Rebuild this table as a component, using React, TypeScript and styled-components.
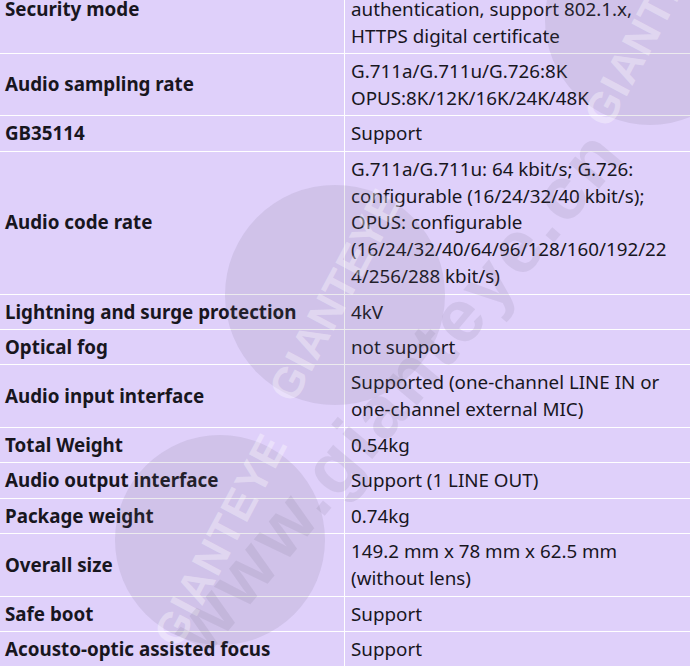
import React from 'react';
import styled, { createGlobalStyle } from 'styled-components';

const GlobalStyle = createGlobalStyle`
  html, body {
    margin: 0;
    padding: 0;
    background: #dfd0fa;
  }
  body {
    font-family: 'Noto Sans', 'Open Sans', sans-serif;
    color: #18161e;
  }
`;

const Viewport = styled.div`
  position: relative;
  width: 690px;
  height: 667px;
  overflow: hidden;
  background: #dfd0fa;
`;

const SpecTable = styled.table`
  width: 690px;
  margin-top: -35px;
  border-collapse: collapse;
  table-layout: fixed;
  font-size: 18.8px;
  line-height: 26.8px;
`;

const Row = styled.tr`
  border-bottom: 1px solid #ffffff;
`;

const LabelCell = styled.td`
  width: 334px;
  padding: 4px 5px 3.7px;
  font-weight: 700;
  vertical-align: middle;
  border-right: 1px solid #ffffff;
`;

const ValueCell = styled.td`
  padding: 4px 5px 3.7px 6px;
  vertical-align: middle;
  word-break: break-all;
`;

const Watermark = styled.div`
  position: absolute;
  inset: 0;
  pointer-events: none;
`;

const Blob = styled.div<{ $x: number; $y: number; $r: number }>`
  position: absolute;
  left: ${({ $x, $r }) => $x - $r}px;
  top: ${({ $y, $r }) => $y - $r}px;
  width: ${({ $r }) => $r * 2}px;
  height: ${({ $r }) => $r * 2}px;
  border-radius: 50%;
  background: rgba(110, 100, 120, 0.13);
  display: flex;
  align-items: center;
  justify-content: center;
`;

const BlobText = styled.span`
  transform: rotate(-62deg);
  font-family: 'Liberation Sans', sans-serif;
  font-weight: 700;
  font-size: 44px;
  letter-spacing: 1px;
  color: rgba(255, 255, 255, 0.35);
  white-space: nowrap;
`;

const Url = styled.div`
  position: absolute;
  left: 185px;
  top: 600px;
  transform: rotate(-50deg);
  transform-origin: left center;
  font-family: 'Liberation Sans', sans-serif;
  font-weight: 700;
  font-size: 74px;
  letter-spacing: 4px;
  color: rgba(110, 100, 120, 0.12);
  white-space: nowrap;
`;

const rows: [string, string[]][] = [
  ['Security mode', ['\u00a0', 'authentication, support 802.1.x,', 'HTTPS digital certificate']],
  ['Audio sampling rate', ['G.711a/G.711u/G.726:8K', 'OPUS:8K/12K/16K/24K/48K']],
  ['GB35114', ['Support']],
  [
    'Audio code rate',
    [
      'G.711a/G.711u: 64 kbit/s; G.726:',
      'configurable (16/24/32/40 kbit/s);',
      'OPUS: configurable',
      '(16/24/32/40/64/96/128/160/192/22',
      '4/256/288 kbit/s)',
    ],
  ],
  ['Lightning and surge protection', ['4kV']],
  ['Optical fog', ['not support']],
  ['Audio input interface', ['Supported (one-channel LINE IN or', 'one-channel external MIC)']],
  ['Total Weight', ['0.54kg']],
  ['Audio output interface', ['Support (1 LINE OUT)']],
  ['Package weight', ['0.74kg']],
  ['Overall size', ['149.2 mm x 78 mm x 62.5 mm', '(without lens)']],
  ['Safe boot', ['Support']],
  ['Acousto-optic assisted focus', ['Support']],
];

const App: React.FC = () => {
  return (
    <Viewport>
      <GlobalStyle />
      <SpecTable>
        <tbody>
          {rows.map(([label, lines]) => (
            <Row key={label}>
              <LabelCell>{label}</LabelCell>
              <ValueCell>
                {lines.map((l, i) => (
                  <React.Fragment key={i}>
                    {i > 0 && <br />}
                    {l}
                  </React.Fragment>
                ))}
              </ValueCell>
            </Row>
          ))}
        </tbody>
      </SpecTable>
      <Watermark>
        <Blob $x={335} $y={295} $r={110}>
          <BlobText>GIANTEYE</BlobText>
        </Blob>
        <Blob $x={220} $y={540} $r={105}>
          <BlobText>GIANTEYE</BlobText>
        </Blob>
        <Blob $x={650} $y={20} $r={105}>
          <BlobText>GIANTEYE</BlobText>
        </Blob>
        <Url>www.gianteye.cn</Url>
      </Watermark>
    </Viewport>
  );
};

export default App;
